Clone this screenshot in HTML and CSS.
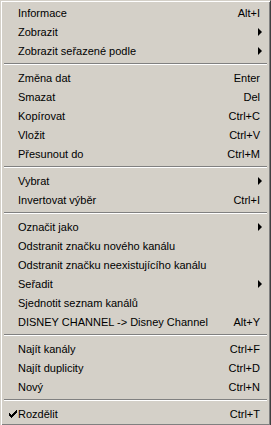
FILE: index.html
```html
<!DOCTYPE html>
<html lang="cs">
<head>
    <meta charset="UTF-8">
    <title>Menu</title>
    <link rel="stylesheet" href="styles.css">
</head>
<body>
    <div class="menu">
        <div class="item"><span class="label">Informace</span><span class="key">Alt+I</span></div>
        <div class="item"><span class="label">Zobrazit</span><span class="arrow"></span></div>
        <div class="item"><span class="label">Zobrazit seřazené podle</span><span class="arrow"></span></div>
        <div class="sep"></div>
        <div class="item"><span class="label">Změna dat</span><span class="key">Enter</span></div>
        <div class="item"><span class="label">Smazat</span><span class="key">Del</span></div>
        <div class="item"><span class="label">Kopírovat</span><span class="key">Ctrl+C</span></div>
        <div class="item"><span class="label">Vložit</span><span class="key">Ctrl+V</span></div>
        <div class="item"><span class="label">Přesunout do</span><span class="key">Ctrl+M</span></div>
        <div class="sep"></div>
        <div class="item"><span class="label">Vybrat</span><span class="arrow"></span></div>
        <div class="item"><span class="label">Invertovat výběr</span><span class="key">Ctrl+I</span></div>
        <div class="sep"></div>
        <div class="item"><span class="label">Označit jako</span><span class="arrow"></span></div>
        <div class="item"><span class="label">Odstranit značku nového kanálu</span></div>
        <div class="item"><span class="label">Odstranit značku neexistujícího kanálu</span></div>
        <div class="item"><span class="label">Seřadit</span><span class="arrow"></span></div>
        <div class="item"><span class="label">Sjednotit seznam kanálů</span></div>
        <div class="item"><span class="label">DISNEY CHANNEL -&gt; Disney Channel</span><span class="key">Alt+Y</span></div>
        <div class="sep"></div>
        <div class="item"><span class="label">Najít kanály</span><span class="key">Ctrl+F</span></div>
        <div class="item"><span class="label">Najít duplicity</span><span class="key">Ctrl+D</span></div>
        <div class="item"><span class="label">Nový</span><span class="key">Ctrl+N</span></div>
        <div class="sep"></div>
        <div class="item checked">
            <svg class="check" width="8" height="8" viewBox="0 0 8 8"><path d="M0 3h1v1h1v1h1v-1h1v-1h1v-1h1v-1h1v-1h1v3h-1v1h-1v1h-1v1h-1v1h-1v1h-1v-1h-1v-1h-1v-1h-1z" fill="#000"/></svg>
            <span class="label">Rozdělit</span><span class="key">Ctrl+T</span>
        </div>
    </div>
</body>
</html>
```

FILE: styles.css
```css
body {
    margin: 0;
    background-color: #d4d0c8;
    font-family: "Liberation Sans", Arial, sans-serif;
    font-size: 11px;
    color: #000000;
}
.menu {
    width: 271px;
    box-sizing: border-box;
    padding: 2px;
    border: 1px solid;
    border-color: #d4d0c8 #404040 #404040 #d4d0c8;
    box-shadow: inset 1px 1px #ffffff, inset -1px -1px #808080;
    background-color: #d4d0c8;
}
.item {
    position: relative;
    display: flex;
    align-items: center;
    height: 19px;
    padding: 0 8px 0 15px;
    white-space: nowrap;
}
.label {
    flex: 1;
}
.key {
    text-align: right;
}
.arrow {
    width: 0;
    height: 0;
    border-top: 4px solid transparent;
    border-bottom: 4px solid transparent;
    border-left: 4px solid #000000;
    margin-right: -2px;
}
.check {
    position: absolute;
    left: 6px;
    top: 6px;
}
.sep {
    height: 8px;
    display: flex;
    flex-direction: column;
    justify-content: center;
    padding: 0 1px;
}
.sep::before {
    content: "";
    display: block;
    border-top: 1px solid #808080;
    border-bottom: 1px solid #ffffff;
}
```
